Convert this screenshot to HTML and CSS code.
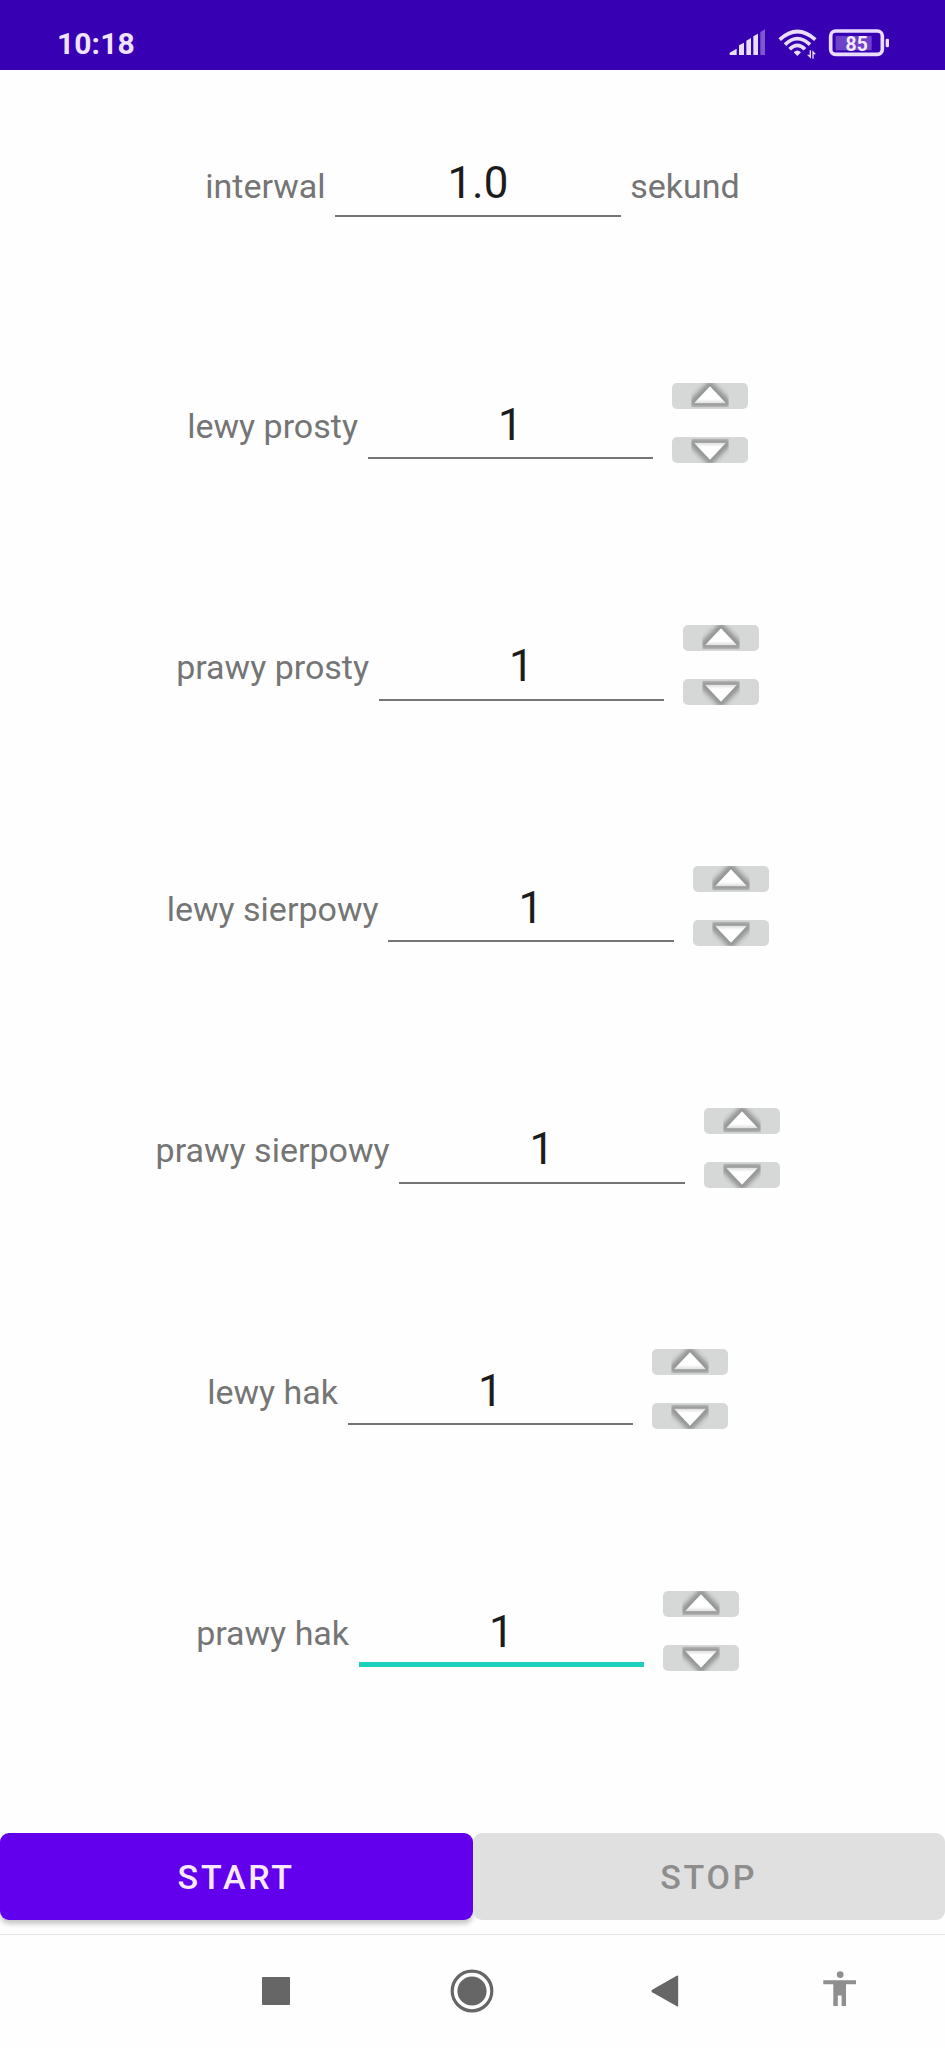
FILE: index.html
```
<!DOCTYPE html>
<html lang="pl">
<head>
<meta charset="utf-8">
<title>Interwal</title>
<link rel="stylesheet" href="styles.css">
</head>
<body>
<svg class="defs" width="0" height="0" aria-hidden="true">
  <defs>
    <filter id="soft" x="-40%" y="-40%" width="180%" height="180%"><feGaussianBlur stdDeviation="7"/></filter>
    <filter id="edge" x="-10%" y="-10%" width="120%" height="120%"><feGaussianBlur stdDeviation="2"/></filter>
    <clipPath id="glyph-box"><rect x="58" y="0" width="112" height="73"/></clipPath>
    <linearGradient id="face" x1="0" y1="0" x2="0" y2="1"><stop offset="0.75" stop-color="#fff"/><stop offset="1" stop-color="#dcdcdc"/></linearGradient>
    <symbol id="arrow" viewBox="0 0 228 78">
      <g clip-path="url(#glyph-box)">
        <path d="M114 -10 L54 50 V72 H174 V50Z" fill="#848484" opacity=".8" filter="url(#soft)"/>
        <path d="M114 10 L162 61 H66Z" fill="url(#face)" filter="url(#edge)"/>
      </g>
    </symbol>
  </defs>
</svg>
<div class="screen">
  <header class="status">
    <span class="clock">10:18</span>
    <svg class="status-icons" viewBox="87 84 486 96">
      <g fill="#eadcfb">
        <path d="M89 165V158L110 146V165ZM117 165V136L132 128V165ZM139 165V122L153 114V165ZM160 165V109L174 101V165Z"/>
        <path d="M181 165V96L195 88V165Z" opacity=".4"/>
        <path d="M292 168L281 157Q292 146 303 157Z"/>
        <path d="M329 151V164H321L333 176V151ZM337 176V151L348 163H341V176Z"/>
        <rect x="557" y="116" width="10" height="26" rx="4"/>
        <rect x="407" y="108" width="108" height="43" opacity=".3"/>
      </g>
      <g fill="none" stroke="#eadcfb" stroke-width="11">
        <path d="M239 119Q292 70 346 119M255 134Q292 98 330 134M269 148Q292 124 315 148"/>
        <rect x="392" y="93" width="155" height="70" rx="15"/>
      </g>
      <text class="battery" x="470" y="153" text-anchor="middle">85</text>
    </svg>
  </header>
  <main class="rows">
    <div class="row row-interval"><span class="label">interwal</span><div class="field">1.0</div><span class="label">sekund</span></div>
    <div class="row"><span class="label">lewy prosty</span><div class="field">1</div><div class="stepper"><button class="step"><svg><use href="#arrow"/></svg></button><button class="step down"><svg><use href="#arrow"/></svg></button></div></div>
    <div class="row"><span class="label">prawy prosty</span><div class="field">1</div><div class="stepper"><button class="step"><svg><use href="#arrow"/></svg></button><button class="step down"><svg><use href="#arrow"/></svg></button></div></div>
    <div class="row"><span class="label">lewy sierpowy</span><div class="field">1</div><div class="stepper"><button class="step"><svg><use href="#arrow"/></svg></button><button class="step down"><svg><use href="#arrow"/></svg></button></div></div>
    <div class="row"><span class="label">prawy sierpowy</span><div class="field">1</div><div class="stepper"><button class="step"><svg><use href="#arrow"/></svg></button><button class="step down"><svg><use href="#arrow"/></svg></button></div></div>
    <div class="row"><span class="label">lewy hak</span><div class="field">1</div><div class="stepper"><button class="step"><svg><use href="#arrow"/></svg></button><button class="step down"><svg><use href="#arrow"/></svg></button></div></div>
    <div class="row"><span class="label">prawy hak</span><div class="field focused">1</div><div class="stepper"><button class="step"><svg><use href="#arrow"/></svg></button><button class="step down"><svg><use href="#arrow"/></svg></button></div></div>
  </main>
  <div class="actions">
    <button class="btn start">START</button>
    <button class="btn stop" disabled>STOP</button>
  </div>
  <nav class="navbar">
    <svg class="nav-recent" viewBox="0 0 28 28"><rect width="28" height="28" rx="1" fill="#666"/></svg>
    <svg class="nav-home" viewBox="0 0 44 44"><circle cx="22" cy="22" r="19.8" fill="none" stroke="#666" stroke-width="3.2"/><circle cx="22" cy="22" r="14.6" fill="#666"/></svg>
    <svg class="nav-back" viewBox="0 0 28 32"><path d="M1.2 14.8L25.8 .8Q27.2 .2 27.2 1.6V30.4Q27.2 31.8 25.8 31.2L1.2 17.2Q-.4 16 1.2 14.8Z" fill="#666"/></svg>
    <svg class="nav-access" viewBox="0 0 34 36"><g fill="#8f8f8f"><circle cx="17.2" cy="3.6" r="3.4"/><path d="M.3 9.3H33V13.2H23V35H18.6V24.4H14.8V35H10.3V13.2H.3Z"/></g></svg>
  </nav>
</div>
</body>
</html>
```
FILE: styles.css
```
body {
  margin: 0;
  font-family: Roboto, sans-serif;
  background: #fefefe;
}

.defs {
  display: block;
  height: 0;
}

.screen {
  display: flex;
  flex-direction: column;
  width: 945px;
  height: 2048px;
  overflow: hidden;
}

.status {
  display: flex;
  justify-content: space-between;
  align-items: flex-start;
  box-sizing: border-box;
  height: 70px;
  padding: 28px 54px 0 57px;
  background: #3700b3;
}

.clock {
  color: #f0e2fc;
  font-size: 30px;
  line-height: 32px;
  font-weight: 700;
  letter-spacing: 0.1px;
}

.status-icons {
  width: 162px;
  height: 32px;
}

.battery {
  fill: #f4eaff;
  font-size: 58px;
  font-weight: 700;
}

.rows {
  flex: none;
  height: 1763px;
}

.row {
  display: flex;
  justify-content: center;
  align-items: center;
  height: 241.5px;
}

.row-interval {
  height: 232.5px;
  align-items: flex-start;
}

.label {
  color: #757575;
  font-size: 34px;
  line-height: 40px;
  white-space: nowrap;
  padding-top: 5px;
}

.row-interval .label {
  margin-top: 96px;
  padding-top: 0;
}

.field {
  box-sizing: border-box;
  width: 285.4px;
  height: 72px;
  margin: 0 9.6px;
  padding-top: 12.5px;
  border-bottom: 2px solid #757575;
  color: #1c1c1c;
  font-size: 43.8px;
  line-height: 50px;
  text-align: center;
}

.row-interval .field {
  margin-top: 75px;
}

.field.focused {
  border-bottom: 5px solid #1bd1bd;
}

.stepper {
  display: flex;
  flex-direction: column;
  gap: 28.4px;
  padding: 0 9.6px;
}

.step {
  display: block;
  width: 76px;
  height: 26px;
  padding: 0;
  border: 0;
  border-radius: 5px;
  background: #d6d8d8;
  overflow: hidden;
}

.step svg {
  display: block;
  width: 76px;
  height: 26px;
}

.step.down svg {
  transform: scaleY(-1);
}

.actions {
  display: grid;
  grid-template-columns: 1fr 1fr;
  flex: none;
  height: 101px;
  align-items: start;
}

.btn {
  height: 87px;
  padding: 1px 0 0;
  border: 0;
  border-radius: 9px;
  font-family: inherit;
  font-size: 34px;
  font-weight: 500;
  letter-spacing: 2.8px;
}

.start {
  background: #6200ee;
  color: #fbeafd;
  box-shadow: 0 4px 5px rgba(0, 0, 0, 0.22);
}

.stop {
  background: #e0e0e0;
  color: #8d8d8d;
}

.navbar {
  display: flex;
  align-items: center;
  flex: none;
  box-sizing: border-box;
  height: 114px;
  border-top: 1px solid #e3e3e3;
  padding-left: 262px;
  padding-bottom: 1px;
}

.nav-recent {
  width: 28px;
  height: 28px;
}

.nav-home {
  width: 44px;
  height: 44px;
  margin-left: 160px;
}

.nav-back {
  width: 28px;
  height: 32px;
  margin-left: 157px;
}

.nav-access {
  width: 34px;
  height: 36px;
  margin-left: 144px;
  margin-bottom: 5px;
}
```
